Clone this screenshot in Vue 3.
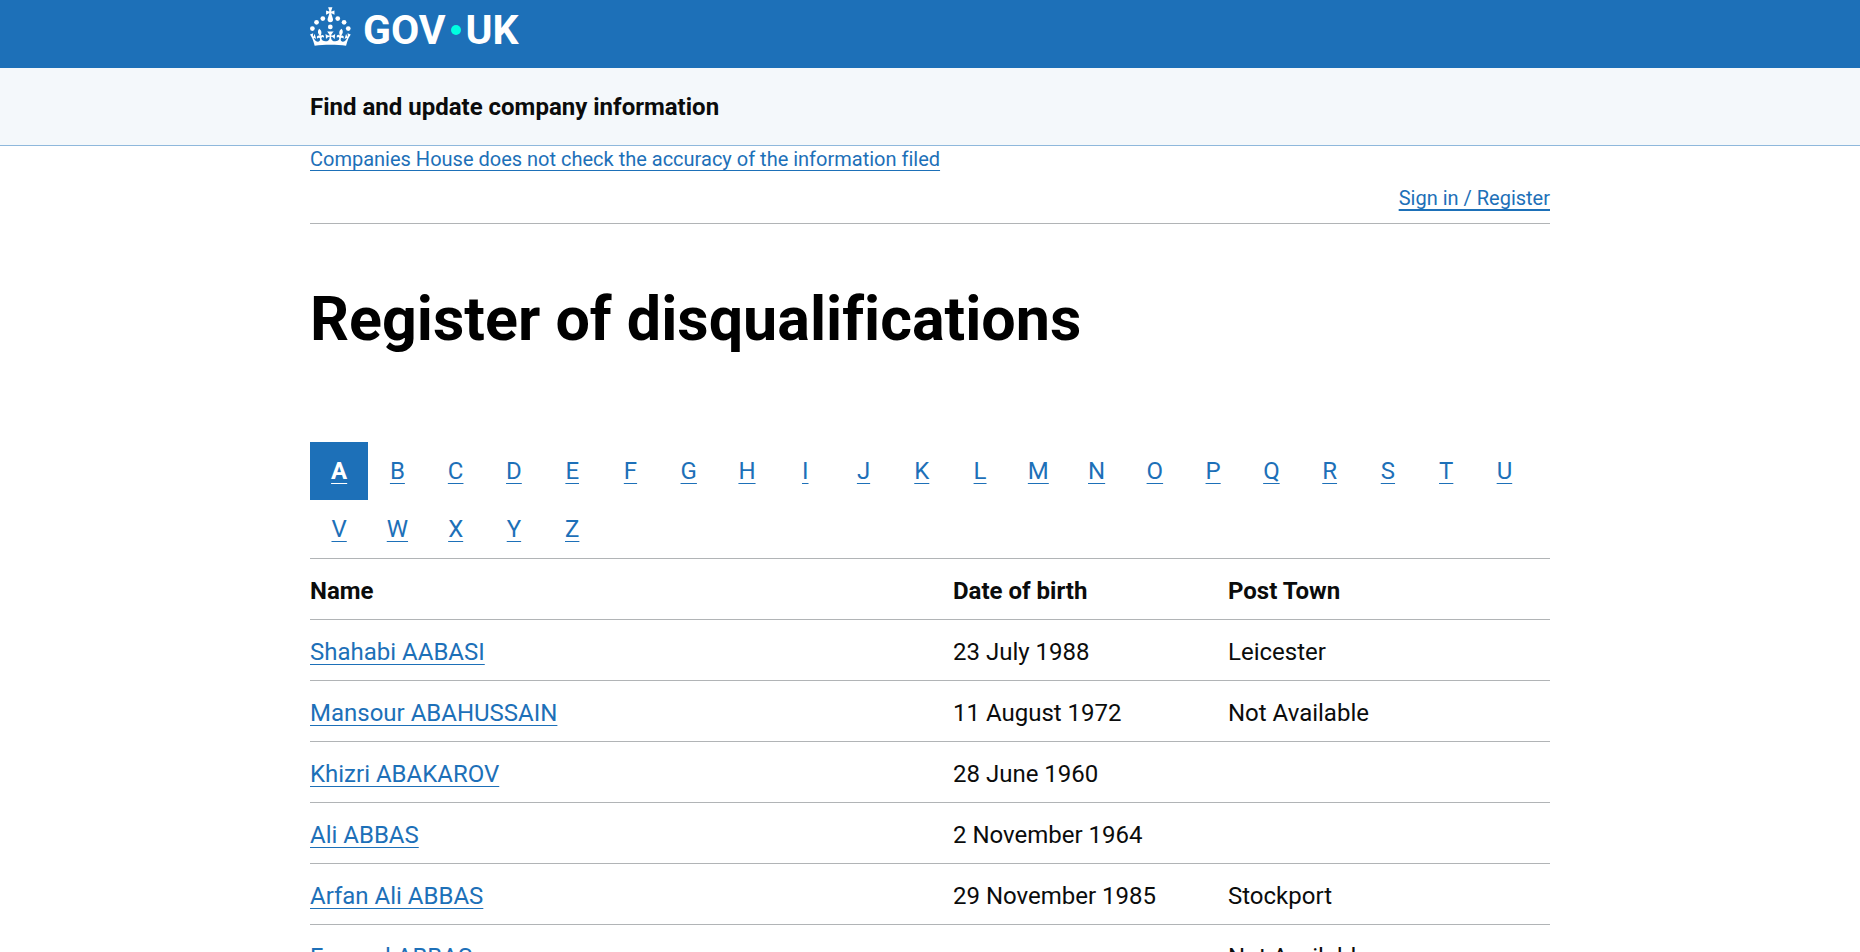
<script setup>
const letters = 'ABCDEFGHIJKLMNOPQRSTUVWXYZ'.split('')
const current = 'A'

const officers = [
  { name: 'Shahabi AABASI', born: '23 July 1988', town: 'Leicester' },
  { name: 'Mansour ABAHUSSAIN', born: '11 August 1972', town: 'Not Available' },
  { name: 'Khizri ABAKAROV', born: '28 June 1960', town: '' },
  { name: 'Ali ABBAS', born: '2 November 1964', town: '' },
  { name: 'Arfan Ali ABBAS', born: '29 November 1985', town: 'Stockport' },
  { name: 'Fayssal ABBAS', born: '', town: 'Not Available' },
]
</script>

<template>
  <div class="page">
    <header class="masthead">
      <div class="container">
        <a class="logo" href="#" aria-label="GOV.UK">
          <svg class="crown" viewBox="0 0 64 60" aria-hidden="true">
            <circle cx="20" cy="17.6" r="3.7" />
            <circle cx="10.2" cy="23.5" r="3.7" />
            <circle cx="3.7" cy="33.2" r="3.7" />
            <circle cx="31.7" cy="30.6" r="3.7" />
            <circle cx="43.3" cy="17.6" r="3.7" />
            <circle cx="53.2" cy="23.5" r="3.7" />
            <circle cx="59.7" cy="33.2" r="3.7" />
            <path d="M33.1,9.8c.2-.1.3-.3.5-.5l4.6,2.4v-6.8l-4.6,1.5c-.1-.2-.3-.3-.5-.5l1.9-5.9h-6.7l1.9,5.9c-.2.1-.3.3-.5.5l-4.6-1.5v6.8l4.6-2.4c.1.2.3.3.5.5l-2.6,8c-.9,2.8,1.2,5.7,4.1,5.7h0c3,0,5.1-2.9,4.1-5.7l-2.6-8ZM37,37.9s-3.4,3.8-4.1,6.1c2.2,0,4.2-.5,6.4-2.8l-.7,8.5c-2-2.8-4.4-4.1-5.7-3.8.1,3.1.5,6.7,5.8,7.2,3.7.3,6.7-1.5,7-3.8.4-2.6-2-4.3-3.7-1.6-1.4-4.5,2.4-6.1,4.9-3.2-1.9-4.5-1.8-7.7,2.4-10.9,3,4,2.6,7.3-1.2,11.1,2.4-1.3,6.2,0,4,4.6-1.2-2.8-3.7-2.2-4.2.2-.3,1.7.7,3.7,3,4.2,1.9.3,4.7-.9,7-5.9-1.3,0-2.4.7-3.9,1.7l2.4-8c.6,2.3,1.4,3.7,2.2,4.5.6-1.6.5-2.8,0-5.3l5,1.8c-2.6,3.6-5.2,8.7-7.3,17.5-7.4-1.1-15.7-1.7-24.5-1.7h0c-8.8,0-17.1.6-24.5,1.7-2.1-8.9-4.7-13.9-7.3-17.5l5-1.8c-.5,2.5-.6,3.7,0,5.3.8-.8,1.6-2.3,2.2-4.5l2.4,8c-1.5-1-2.6-1.7-3.9-1.7,2.3,5,5.2,6.2,7,5.9,2.3-.4,3.3-2.4,3-4.2-.5-2.4-3-3.1-4.2-.2-2.2-4.6,1.6-6,4-4.6-3.7-3.7-4.2-7.1-1.2-11.1,4.2,3.2,4.3,6.4,2.4,10.9,2.5-2.8,6.3-1.3,4.9,3.2-1.8-2.7-4.1-1-3.7,1.6.3,2.3,3.3,4.1,7,3.8,5.4-.5,5.7-4.2,5.8-7.2-1.3-.2-3.7,1-5.7,3.8l-.7-8.5c2.2,2.3,4.2,2.7,6.4,2.8-.7-2.3-4.1-6.1-4.1-6.1h10.6,0Z" />
          </svg>
          <span class="wordmark">GOV<i class="dot"></i>UK</span>
        </a>
      </div>
    </header>

    <div class="service">
      <div class="container">
        <a class="service-name" href="#">Find and update company information</a>
      </div>
    </div>

    <div class="container">
      <p class="notice"><a class="link" href="#">Companies House does not check the accuracy of the information filed</a></p>
      <nav class="account" aria-label="Account">
        <a class="link" href="#">Sign in / Register</a>
      </nav>

      <main>
        <h1 class="title">Register of disqualifications</h1>

        <nav aria-label="Surname initial">
          <ul class="alphabet">
            <li v-for="letter in letters" :key="letter" class="initial" :class="{ active: letter === current }">
              <a class="link" href="#" :aria-current="letter === current ? 'page' : null">{{ letter }}</a>
            </li>
          </ul>
        </nav>

        <table class="register">
          <thead>
            <tr>
              <th class="col-name" scope="col">Name</th>
              <th class="col-born" scope="col">Date of birth</th>
              <th scope="col">Post Town</th>
            </tr>
          </thead>
          <tbody>
            <tr v-for="officer in officers" :key="officer.name">
              <td><a class="link" href="#">{{ officer.name }}</a></td>
              <td>{{ officer.born }}</td>
              <td>{{ officer.town }}</td>
            </tr>
          </tbody>
        </table>
      </main>
    </div>
  </div>
</template>

<style>
html {
  overflow: hidden;
  background: #ffffff;
}

body {
  margin: 0;
}
</style>

<style scoped>
.page {
  font-family: Roboto, "Liberation Sans", sans-serif;
  font-size: 24px;
  line-height: 32px;
  font-variant-ligatures: none;
  color: #0b0c0c;
}

.container {
  max-width: 1240px;
  margin: 0 auto;
}

.masthead {
  background: #1d70b8;
  padding: 6px 0 22px;
}

.logo {
  display: inline-flex;
  align-items: center;
  gap: 12px;
  height: 40px;
  color: #ffffff;
  text-decoration: none;
  vertical-align: top;
}

.crown {
  width: 41px;
  height: 39px;
  fill: currentColor;
}

.wordmark {
  display: flex;
  align-items: center;
  font-size: 41px;
  line-height: 40px;
  font-weight: 700;
  padding-top: 8px;
}

.dot {
  width: 10px;
  height: 10px;
  margin: 0 5px;
  border-radius: 50%;
  background: #00ffe0;
}

.service {
  background: #f4f8fb;
  border-bottom: 1px solid #8eb8dc;
  padding: 23px 0 22px;
}

.service-name {
  color: inherit;
  font-weight: 700;
  text-decoration: none;
}

.link {
  color: #1d70b8;
  text-decoration: underline;
  text-decoration-thickness: 1px;
  text-decoration-skip-ink: none;
  text-underline-offset: 4px;
}

.notice {
  margin: 0;
  font-size: 20px;
  line-height: 26px;
}

.account {
  display: flex;
  justify-content: flex-end;
  padding: 13px 0 12px;
  border-bottom: 1px solid #b1b4b6;
  font-size: 20px;
  line-height: 26px;
}

.account .link {
  text-decoration-thickness: 2px;
}

.title {
  margin: 62px 0 90px;
  font-size: 61px;
  line-height: 66px;
  font-weight: 700;
  color: #000000;
}

.alphabet {
  display: flex;
  flex-wrap: wrap;
  margin: 0;
  padding: 0;
  list-style: none;
}

.initial {
  width: 4.7%;
  line-height: 58px;
  text-align: center;
}

.active {
  background: #1d70b8;
  font-weight: 700;
}

.active .link {
  color: #ffffff;
}

.register {
  width: 100%;
  table-layout: fixed;
  border-collapse: collapse;
  border-top: 1px solid #b1b4b6;
}

.register th,
.register td {
  height: 34px;
  padding: 16px 24px 10px 0;
  border-bottom: 1px solid #b1b4b6;
  text-align: left;
  vertical-align: top;
}

.col-name {
  width: 619px;
}

.col-born {
  width: 251px;
}
</style>
